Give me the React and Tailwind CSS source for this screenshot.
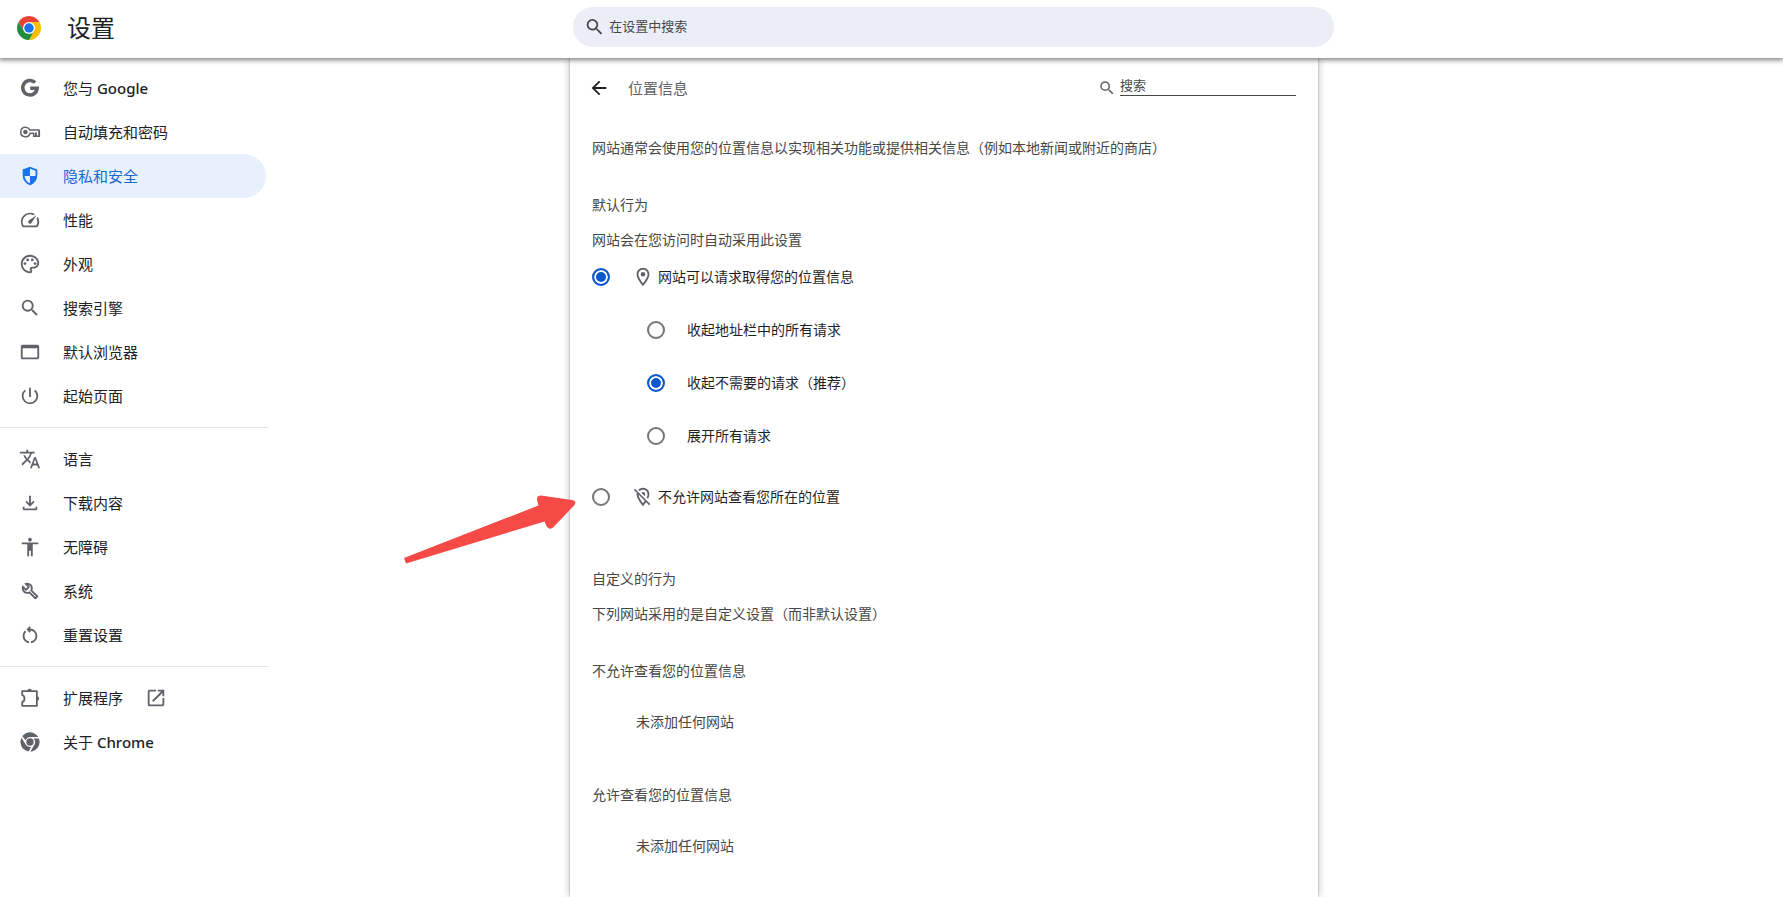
import React, { useState } from "react";
import {
  MdArrowBack,
  MdSearch,
  MdOutlinePalette,
  MdPowerSettingsNew,
  MdTranslate,
  MdAccessibility,
  MdOpenInNew,
} from "react-icons/md";

// Monochrome icons that the icon package has no close match for
function Icon({ children, viewBox = "0 0 24 24" }) {
  return (
    <svg width="22" height="22" viewBox={viewBox} fill="currentColor" aria-hidden="true" className="shrink-0">
      {children}
    </svg>
  );
}

const GoogleIcon = () => (
  <Icon>
    <path
      fill="none"
      stroke="currentColor"
      strokeWidth="3.800"
      d="M17.600 6.100A7.900 7.900 0 1 0 19.900 12.200H12.200"
    />
  </Icon>
);

const KeyIcon = () => (
  <Icon>
    <path
      fillRule="evenodd"
      d="M7 6a6 6 0 1 0 5.700 8.200h2.500V17.500H22a1 1 0 0 0 1-1v-6a1.500 1.500 0 0 0-1.500-1.500h-9.300A6 6 0 0 0 7 6zm0 1.700a4.300 4.300 0 0 1 4.100 3H21v5h-1.500v-3.200h-2.200v3.200h-.6v-3.200h-5.400A4.300 4.300 0 1 1 7 7.700z"
    />
    <circle cx="7" cy="12" r="2.500" />
  </Icon>
);

const ShieldIcon = () => (
  <Icon viewBox="0 -960 960 960">
    <path d="M480-80q139-35 229.500-159.500T800-516v-244L480-880 160-760v244q0 152 90.500 276.500T480-80Zm0-84q-97-30-162-118.500T242-480h238v-315l240 90v207q0 7-2 18H480v316Z" />
  </Icon>
);

const SpeedIcon = () => (
  <Icon>
    <path d="m20.380 8.570-1.230 1.850a8 8 0 0 1-.22 7.580H5.070A8 8 0 0 1 15.580 6.850l1.850-1.230A10 10 0 0 0 3.350 19a2 2 0 0 0 1.720 1h13.850a2 2 0 0 0 1.740-1 10 10 0 0 0-.27-10.440z" />
    <path d="M10.590 15.410a2 2 0 0 0 2.830 0l5.660-8.490-8.490 5.660a2 2 0 0 0 0 2.830z" />
  </Icon>
);

const BrowserIcon = () => (
  <Icon>
    <path d="M20 4H4c-1.110 0-2 .9-2 2v12c0 1.100.89 2 2 2h16c1.100 0 2-.9 2-2V6c0-1.100-.9-2-2-2zm0 14H4V8h16v10z" />
  </Icon>
);

const DownloadIcon = () => (
  <Icon viewBox="0 -960 960 960">
    <path d="M480-320 280-520l56-58 104 104v-326h80v326l104-104 56 58-200 200ZM240-160q-33 0-56.500-23.500T160-240v-80h80v80h480v-80h80v80q0 33-23.500 56.500T720-160H240Z" />
  </Icon>
);

const WrenchIcon = () => (
  <Icon viewBox="0 -960 960 960">
    <path d="M686-132 444-376q-20 8-40.500 12t-43.500 4q-100 0-170-70t-70-170q0-36 10-68.500t28-61.500l146 146 72-72-146-146q29-18 61.500-28t68.500-10q100 0 170 70t70 170q0 23-4 43.500T584-516l244 242q12 12 12 29t-12 29l-84 84q-12 12-29 12t-29-12Zm29-85 27-27-256-256q18-20 26-46.500t8-53.500q0-60-38.500-104.500T386-758l74 74q12 12 12 28t-12 28L332-500q-12 12-28 12t-28-12l-74-74q9 57 53.500 95.500T360-440q26 0 53-8t47-25l255 256Z" />
  </Icon>
);

const ResetIcon = () => (
  <Icon viewBox="0 -960 960 960">
    <path d="M440-122q-121-15-200.500-105.500T160-440q0-66 26-126.500T260-672l57 57q-38 34-57.500 79T240-440q0 88 56 155.500T440-202v80Zm80 0v-80q87-16 143.500-83T720-440q0-100-70-170t-170-70h-3l44 44-56 56-140-140 140-140 56 56-44 44h3q134 0 227 93t93 227q0 121-79.500 211.500T520-122Z" />
  </Icon>
);

const ExtensionIcon = () => (
  <Icon>
    <path
      fill="none"
      stroke="currentColor"
      strokeWidth="2"
      strokeLinejoin="round"
      d="M3.500 4.500H19.500V20.500H3.500V16.200C6.800 15.800 6.800 9.200 3.500 8.800z"
    />
    <path d="M9 4.500a2.500 2.500 0 0 1 5 0zM19.500 10a2.500 2.500 0 0 1 0 5z" />
  </Icon>
);

const ChromeIcon = () => (
  <Icon>
    <circle cx="12" cy="12" r="4" />
    <path d="M12 6.500h9A10.500 10.500 0 0 0 3.600 5.700L7.200 10A5.500 5.500 0 0 1 12 6.500zM2.700 7.300A10.500 10.500 0 0 0 10.500 22.400l2.700-5A5.500 5.500 0 0 1 7.100 14.500zM21.700 8.200H16a5.500 5.500 0 0 1 .7 6.700l-4.300 7.600A10.500 10.500 0 0 0 21.700 8.200z" />
  </Icon>
);

const PinIcon = () => (
  <Icon>
    <path d="M12 2C8.130 2 5 5.130 5 9c0 5.250 7 13 7 13s7-7.750 7-13c0-3.870-3.130-7-7-7zM7 9c0-2.760 2.240-5 5-5s5 2.240 5 5c0 2.880-2.880 7.190-5 9.880C9.920 16.210 7 11.850 7 9z" />
    <circle cx="12" cy="9" r="2.500" />
  </Icon>
);

const PinOffIcon = () => (
  <Icon>
    <path d="M12 4c2.760 0 5 2.240 5 5 0 1.060-.39 2.320-1 3.620l1.490 1.490C18.370 12.360 19 10.570 19 9c0-3.870-3.130-7-7-7-2 0-3.800.84-5.070 2.180l1.430 1.430C9.260 4.620 10.550 4 12 4zm0 2.500a2.500 2.500 0 0 1 2.500 2.500c0 .74-.33 1.390-.83 1.850l-3.520-3.520c.46-.5 1.110-.83 1.850-.83zm4.370 9.600l-4.630-4.630-.11-.11L3.270 3 2 4.270l3.180 3.180C5.070 7.950 5 8.470 5 9c0 5.250 7 13 7 13s1.670-1.850 3.380-4.350L18.730 21 20 19.730l-3.630-3.630zM12 18.880c-2.010-2.580-4.800-6.740-4.980-9.590l6.920 6.920c-.65.98-1.330 1.890-1.940 2.670z" />
  </Icon>
);

const ChromeLogo = () => (
  <svg width="24" height="24" viewBox="0 0 48 48" aria-hidden="true" className="shrink-0">
    <path d="M24 12h20.780A24 24 0 0 0 3.220 12l10.390 18z" fill="#ea4335" />
    <path d="M34.390 30L24 48A24 24 0 0 0 44.780 12H24z" fill="#fbbc04" />
    <path d="M13.610 30L3.220 12A24 24 0 0 0 24 48l10.390-18z" fill="#1e8e3e" />
    <circle cx="24" cy="24" r="12" fill="#fff" />
    <circle cx="24" cy="24" r="9.500" fill="#1a73e8" />
  </svg>
);

const menuGroups = [
  [
    { label: "您与", brand: "Google", icon: <GoogleIcon /> },
    { label: "自动填充和密码", icon: <KeyIcon /> },
    { label: "隐私和安全", icon: <ShieldIcon />, active: true },
    { label: "性能", icon: <SpeedIcon /> },
    { label: "外观", icon: <MdOutlinePalette size={22} /> },
    { label: "搜索引擎", icon: <MdSearch size={22} /> },
    { label: "默认浏览器", icon: <BrowserIcon /> },
    { label: "起始页面", icon: <MdPowerSettingsNew size={22} /> },
  ],
  [
    { label: "语言", icon: <MdTranslate size={22} /> },
    { label: "下载内容", icon: <DownloadIcon /> },
    { label: "无障碍", icon: <MdAccessibility size={22} /> },
    { label: "系统", icon: <WrenchIcon /> },
    { label: "重置设置", icon: <ResetIcon /> },
  ],
  [
    { label: "扩展程序", icon: <ExtensionIcon />, external: true },
    { label: "关于", brand: "Chrome", icon: <ChromeIcon /> },
  ],
];

function Header() {
  return (
    <header className="relative z-10 grid h-[58px] grid-cols-[573fr_761px_449fr] items-start bg-white pt-[7px] shadow-[0_1px_5px_1px_rgba(0,0,0,0.5)]">
      <div className="flex h-[42px] items-center gap-[26px] pl-[17px]">
        <ChromeLogo />
        <h1 className="text-2xl leading-8 text-[#202124]">设置</h1>
      </div>
      <label className="flex h-10 items-center gap-1 rounded-full bg-[#ebeef7] pl-[11px] text-[#474747]">
        <MdSearch size={22} />
        <input
          type="text"
          aria-label="在设置中搜索"
          placeholder="在设置中搜索"
          className="w-full bg-transparent text-[13px] outline-none placeholder:text-[#474747]"
        />
      </label>
    </header>
  );
}

function Sidebar() {
  return (
    <nav className="w-[268px] pt-2">
      {menuGroups.map((group, i) => (
        <ul key={i} className={i > 0 ? "mt-[9px] border-t border-[#e3e4e6] pt-[9px]" : ""}>
          {group.map((item) => (
            <li key={item.label}>
              <a
                href="#"
                className={`mr-[2px] flex h-11 items-center gap-[22px] rounded-r-full pl-[19px] text-[15px] leading-5 ${
                  item.active ? "bg-[#e8f0fe] text-[#1a73e8]" : "text-[#5f6368]"
                }`}
              >
                {item.icon}
                <span className={item.active ? "text-[#1967d2]" : "text-[#202124]"}>
                  {item.label}
                  {item.brand && <span className="font-medium"> {item.brand}</span>}
                </span>
                {item.external && <MdOpenInNew size={22} />}
              </a>
            </li>
          ))}
        </ul>
      ))}
    </nav>
  );
}

function Radio({ name, checked, onChange }) {
  return (
    <input
      type="radio"
      name={name}
      checked={checked}
      onChange={onChange}
      className="size-[18px] shrink-0 appearance-none rounded-full border-2 border-[#757575] checked:border-[#0b57d0] checked:bg-[#0b57d0] checked:shadow-[inset_0_0_0_2px_white]"
    />
  );
}

function Pointer() {
  return (
    <svg
      width="172"
      height="70"
      viewBox="0 0 172 70"
      aria-hidden="true"
      className="pointer-events-none absolute top-[21px] right-full mr-4"
    >
      <path
        d="M0 63L134.500 10.500L133 5Q132.500 0.500 137 0.500L168 5Q173 6 170.500 10L150.500 31Q146.500 36 143 32L140.500 26.500L2 68.500Z"
        fill="#f54a45"
      />
    </svg>
  );
}

function LocationPanel() {
  const [access, setAccess] = useState("ask");
  const [prompt, setPrompt] = useState("quiet");

  const prompts = [
    { id: "collapse", label: "收起地址栏中的所有请求" },
    { id: "quiet", label: "收起不需要的请求（推荐）" },
    { id: "expand", label: "展开所有请求" },
  ];

  return (
    <main className="min-h-[calc(100vh-58px)] bg-white px-[22px] text-sm leading-5 text-[#474747] shadow-[0_0_2px_rgba(0,0,0,0.3),0_0_8px_rgba(0,0,0,0.25)]">
      <div className="flex h-[60px] items-center">
        <button type="button" aria-label="返回" className="-ml-1 text-[#1f1f1f]">
          <MdArrowBack size={22} />
        </button>
        <h2 className="ml-[18px] flex-1 text-[15px] text-[#5f6368]">位置信息</h2>
        <label className="flex items-center gap-1 text-[#5f6368]">
          <MdSearch size={18} />
          <input
            type="search"
            aria-label="搜索"
            placeholder="搜索"
            className="mb-1 h-5 w-44 border-b border-[#474747] pb-[2px] text-[13px] outline-none placeholder:text-[#474747]"
          />
        </label>
      </div>

      <p className="mt-5">网站通常会使用您的位置信息以实现相关功能或提供相关信息（例如本地新闻或附近的商店）</p>

      <h3 className="mt-[37px]">默认行为</h3>
      <p className="mt-[15px]">网站会在您访问时自动采用此设置</p>

      <div className="text-[#1f1f1f]">
        <label className="mt-1 flex h-[46px] items-center">
          <Radio name="access" checked={access === "ask"} onChange={() => setAccess("ask")} />
          <span className="ml-[22px] flex items-center gap-1 text-[#5f6368]">
            <PinIcon />
            <span className="text-[#1f1f1f]">网站可以请求取得您的位置信息</span>
          </span>
        </label>

        <div className="pt-[3px] pl-[55px]">
          {prompts.map((item) => (
            <label key={item.id} className="flex h-[53px] items-center gap-[22px]">
              <Radio name="prompt" checked={prompt === item.id} onChange={() => setPrompt(item.id)} />
              {item.label}
            </label>
          ))}
        </div>

        <div className="relative mt-3">
          <label className="flex h-[46px] items-center">
            <Radio name="access" checked={access === "block"} onChange={() => setAccess("block")} />
            <span className="ml-[22px] flex items-center gap-1 text-[#5f6368]">
              <PinOffIcon />
              <span className="text-[#1f1f1f]">不允许网站查看您所在的位置</span>
            </span>
          </label>
          <Pointer />
        </div>
      </div>

      <h3 className="mt-[49px]">自定义的行为</h3>
      <p className="mt-[15px]">下列网站采用的是自定义设置（而非默认设置）</p>

      <h3 className="mt-[37px]">不允许查看您的位置信息</h3>
      <p className="mt-[31px] pl-11">未添加任何网站</p>

      <h3 className="mt-[53px]">允许查看您的位置信息</h3>
      <p className="mt-[31px] pl-11">未添加任何网站</p>
    </main>
  );
}

export default function App() {
  return (
    <div className="h-screen overflow-hidden bg-white font-['Noto_Sans','Noto_Sans_CJK_SC',sans-serif]">
      <Header />
      <div className="grid grid-cols-[570fr_748px_465fr]">
        <Sidebar />
        <LocationPanel />
      </div>
    </div>
  );
}
